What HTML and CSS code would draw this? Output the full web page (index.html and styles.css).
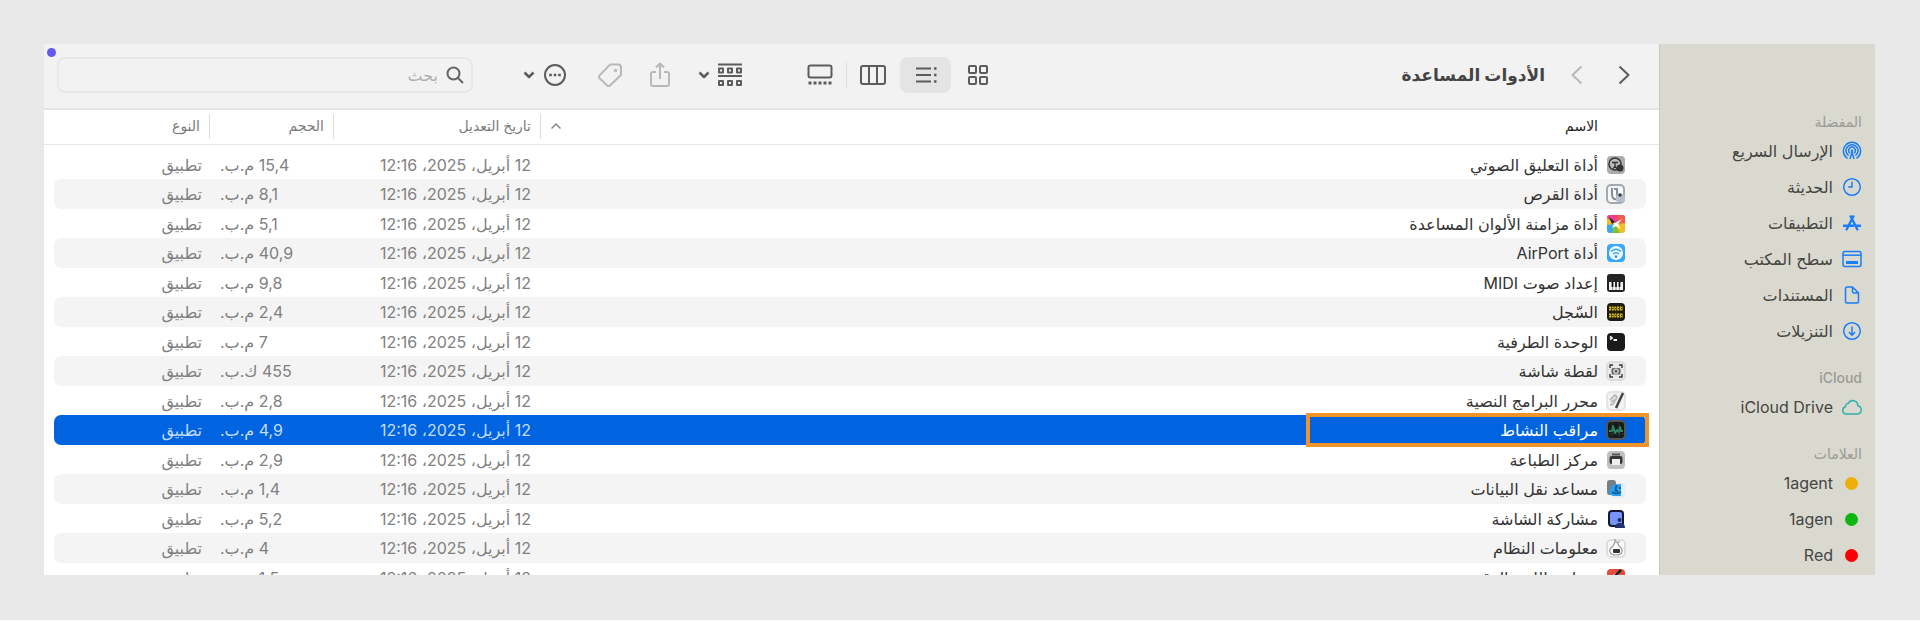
FILE: index.html
```
<!DOCTYPE html>
<html lang="ar" dir="rtl">
<head>
    <meta charset="UTF-8">
    <meta name="viewport" content="width=device-width, initial-scale=1.0">
    <title>الأدوات المساعدة</title>
    <link rel="stylesheet" href="styles.css">
</head>
<body>
<div class="desktop">
    <div class="window">
        <!-- الشريط الجانبي -->
        <nav class="sidebar">
            <h2>المفضلة</h2>
            <ul>
                <li><a href="#"><svg viewBox="0 0 20 20"><path d="M5.5 17.3a8.6 8.6 0 1 1 9 0M6.6 14.6a6 6 0 1 1 6.8 0M8 12.2a3.4 3.4 0 1 1 4 0M8 18l2-7 2 7"/><circle class="fill" cx="10" cy="9.7" r="1.3"/></svg>الإرسال السريع</a></li>
                <li><a href="#"><svg viewBox="0 0 20 20"><circle cx="10" cy="10" r="8.3"/><path d="M10 4.8V10H6.2"/></svg>الحديثة</a></li>
                <li><a href="#"><svg class="thick" viewBox="0 0 20 20"><path d="M8.2 2.5l7.6 14.8M11.8 2.5L4.2 17.3M1 12.8h11M14 12.8h5"/></svg>التطبيقات</a></li>
                <li><a href="#"><svg viewBox="0 0 20 20"><rect x="1" y="2.5" width="18" height="15" rx="2"/><path d="M1 6.2h18"/><rect class="fill" x="4" y="12" width="12" height="3"/></svg>سطح المكتب</a></li>
                <li><a href="#"><svg viewBox="0 0 20 20"><path d="M5 2h5.5L16.5 8v8.5a1.5 1.5 0 0 1-1.5 1.5H5a1.5 1.5 0 0 1-1.5-1.5v-13A1.5 1.5 0 0 1 5 2zM10.5 2v4.5A1.5 1.5 0 0 0 12 8h4.5"/></svg>المستندات</a></li>
                <li><a href="#"><svg viewBox="0 0 20 20"><circle cx="10" cy="10" r="8.3"/><path d="M10 5.5v8.5M6.9 11l3.1 3.2 3.1-3.2"/></svg>التنزيلات</a></li>
            </ul>
            <h2>iCloud</h2>
            <ul>
                <li><a href="#"><svg class="cloud" viewBox="0 0 20 20"><path d="M4.5 17a3.7 3.7 0 0 1-.9-7.3 3 3 0 0 1 2.8-3.4 5 5 0 0 1 9.4 2.4 4.2 4.2 0 0 1-.3 8.3z"/></svg>iCloud Drive</a></li>
            </ul>
            <h2>العلامات</h2>
            <ul>
                <li><a href="#"><i class="tag yellow"></i>1agent</a></li>
                <li><a href="#"><i class="tag green"></i>1agen</a></li>
                <li><a href="#"><i class="tag red"></i>Red</a></li>
            </ul>
        </nav>

        <main class="content">
            <!-- شريط الأدوات -->
            <header class="toolbar">
                <div class="nav">
                    <button aria-label="رجوع"><svg width="12" height="20" viewBox="0 0 12 20"><path d="M1.5 1.5l9 8.5-9 8.500"/></svg></button>
                    <button class="dim" aria-label="تقدم"><svg width="12" height="20" viewBox="0 0 12 20"><path d="M10.5 1.5l-9 8.5 9 8.500"/></svg></button>
                </div>
                <h1>الأدوات المساعدة</h1>
                <div class="views">
                    <button aria-label="أيقونات"><svg width="22" height="22" viewBox="0 0 22 22"><rect x="2" y="2" width="7" height="7" rx="1"/><rect x="13" y="2" width="7" height="7" rx="1"/><rect x="2" y="13" width="7" height="7" rx="1"/><rect x="13" y="13" width="7" height="7" rx="1"/></svg></button>
                    <button class="on" aria-label="قائمة"><svg width="24" height="20" viewBox="0 0 24 20"><path d="M2 3.500h15M2 10h15M2 16.500h15"/><path d="M20 3.500h2.500M20 10h2.500M20 16.500h2.500" stroke-width="2.500"/></svg></button>
                    <button aria-label="أعمدة"><svg width="26" height="22" viewBox="0 0 26 22"><rect x="1" y="2" width="24" height="18" rx="2"/><path d="M9 2v18M17 2v18"/></svg></button>
                    <span class="line"></span>
                    <button aria-label="معرض"><svg width="26" height="22" viewBox="0 0 26 22"><rect x="1.500" y="1.500" width="23" height="12" rx="2"/><path d="M1.500 19h23" stroke-width="3" stroke-dasharray="3 2"/></svg></button>
                </div>
                <button class="menu group" aria-label="تجميع"><svg width="24" height="24" viewBox="0 0 24 24"><path d="M0 1.500h24M0 13h24"/><path d="M1 5.500h4v4H1zM10 5.500h4v4h-4zM19 5.500h4v4h-4zM1 18h4v4H1zM10 18h4v4h-4zM19 18h4v4h-4z"/></svg><svg width="12" height="8" viewBox="0 0 12 8"><path d="M1.500 1.500L6 6l4.500-4.500" stroke-width="2.500"/></svg></button>
                <button class="dim share" aria-label="مشاركة"><svg width="20" height="26" viewBox="0 0 20 26"><path d="M6 10H3a2 2 0 0 0-2 2v10a2 2 0 0 0 2 2h14a2 2 0 0 0 2-2V12a2 2 0 0 0-2-2h-3M10 17V2M6 5.500l4-4 4 4"/></svg></button>
                <button class="dim tags" aria-label="علامات"><svg width="24" height="26" viewBox="0 0 24 26"><path d="M13 2.500h7a3 3 0 0 1 3 3V12a2 2 0 0 1-.6 1.500L12 23.500a2 2 0 0 1-2.900 0L1.600 16.300a2 2 0 0 1 0-2.900L11.500 3.100A2 2 0 0 1 13 2.500z"/><circle cx="17.500" cy="8.500" r=".7"/></svg></button>
                <button class="menu more" aria-label="المزيد"><svg width="24" height="24" viewBox="0 0 24 24"><circle cx="12" cy="12" r="10"/><path d="M6.200 12h2.600M10.700 12h2.600M15.200 12h2.600" stroke-width="2.500"/></svg><svg width="12" height="8" viewBox="0 0 12 8"><path d="M1.500 1.500L6 6l4.500-4.500" stroke-width="2.500"/></svg></button>
                <label class="search">
                    <svg width="18" height="18" viewBox="0 0 18 18"><circle cx="7.500" cy="7.500" r="6"/><path d="M12 12l5 5"/></svg>
                    <input type="text" placeholder="بحث" aria-label="بحث">
                </label>
            </header>

            <!-- قائمة الملفات -->
            <table>
                <colgroup><col><col class="c-date"><col class="c-size"><col class="c-kind"></colgroup>
                <thead>
                    <tr>
                        <th class="name">الاسم <svg width="12" height="8" viewBox="0 0 12 8"><path d="M1.500 6.500L6 2l4.500 4.500"/></svg></th>
                        <th>تاريخ التعديل</th>
                        <th>الحجم</th>
                        <th>النوع</th>
                    </tr>
                </thead>
                <tbody>
                    <tr>
                        <td><svg viewBox="0 0 20 20"><rect x="1" y="1" width="18" height="18" rx="4" fill="#a9adb0"/><circle cx="9" cy="9" r="6" fill="#b9bdc0" stroke="#333" stroke-width="1.500"/><path d="M6 7.500h6M9 7v4l-2 3M9 11l2 3" stroke="#333" stroke-width="1.300"/><circle cx="14" cy="13" r="3.500" fill="#333"/></svg>أداة التعليق الصوتي</td>
                        <td>12 أبريل، 2025، 12:16</td><td>15,4 م.ب.</td><td>تطبيق</td>
                    </tr>
                    <tr>
                        <td><svg viewBox="0 0 20 20"><rect x="1" y="1" width="17" height="18" rx="4" fill="#f6f7f8" stroke="#a4a9ad"/><path d="M6 4v6q0 6 5 5V5H8" fill="#fff" stroke="#858b90"/><rect x="10" y="10" width="9" height="8" rx="2" fill="#b4bfc9"/><circle cx="14" cy="11" r="1.700" fill="#333f4a"/></svg>أداة القرص</td>
                        <td>12 أبريل، 2025، 12:16</td><td>8,1 م.ب.</td><td>تطبيق</td>
                    </tr>
                    <tr>
                        <td><svg viewBox="0 0 20 20"><rect x="1" y="1" width="18" height="18" rx="3" fill="#f5bd27"/><path d="M4 1h12a3 3 0 0 1 3 3L10 10 1 4a3 3 0 0 1 3-3z" fill="#e8408c"/><path d="M12 1h4a3 3 0 0 1 3 3v5l-8 1z" fill="#ef5c49"/><path d="M1 11l8-1-3 9H4a3 3 0 0 1-3-3z" fill="#38a8e8"/><path d="M9 11l-3 8h8z" fill="#70c83d"/><path d="M5 5l4 4 7-4-4 5 3 5-5-3-4 2 2-4z" fill="#fff"/><path d="M3 3l6 5-3 2z" fill="#222"/></svg>أداة مزامنة الألوان المساعدة</td>
                        <td>12 أبريل، 2025، 12:16</td><td>5,1 م.ب.</td><td>تطبيق</td>
                    </tr>
                    <tr>
                        <td><svg viewBox="0 0 20 20"><rect x="1" y="1" width="18" height="18" rx="4" fill="#38a7fa"/><circle cx="10" cy="10" r="7" fill="#edfaff"/><path d="M5 8.500q5-4.500 10 0M7 11q3-2.600 6 0" stroke="#38a7fa" stroke-width="1.500"/><circle cx="10" cy="13.500" r="1.300" fill="#287fe8"/></svg>أداة AirPort</td>
                        <td>12 أبريل، 2025، 12:16</td><td>40,9 م.ب.</td><td>تطبيق</td>
                    </tr>
                    <tr>
                        <td><svg viewBox="0 0 20 20"><rect x="1" y="1" width="18" height="18" rx="3" fill="#242424"/><path d="M3 9h14v8H3z" fill="#f0f0f0"/><path d="M6.500 9v5M10 9v5M13.500 9v5" stroke="#111" stroke-width="1.800"/><path d="M6.500 14v3M10 14v3M13.500 14v3" stroke="#777" stroke-width=".7"/></svg>إعداد صوت MIDI</td>
                        <td>12 أبريل، 2025، 12:16</td><td>9,8 م.ب.</td><td>تطبيق</td>
                    </tr>
                    <tr>
                        <td><svg viewBox="0 0 20 20"><rect x="1" y="1" width="18" height="18" rx="4" fill="#1d1b12"/><path d="M3 6.500h14M3 13.500h14" stroke="#d8bd17" stroke-width="4" stroke-dasharray="2 .7"/><path d="M3 6.500h14M3 13.500h14" stroke="#1d1b12" stroke-width=".8" stroke-dasharray="1 2"/></svg>السّجل</td>
                        <td>12 أبريل، 2025، 12:16</td><td>2,4 م.ب.</td><td>تطبيق</td>
                    </tr>
                    <tr>
                        <td><svg viewBox="0 0 20 20"><rect x="1" y="1" width="18" height="18" rx="4" fill="#1b1b1b"/><path d="M4 4.500l2 1.500-2 1.500M7.500 8h3.500" stroke="#eee"/></svg>الوحدة الطرفية</td>
                        <td>12 أبريل، 2025، 12:16</td><td>7 م.ب.</td><td>تطبيق</td>
                    </tr>
                    <tr>
                        <td><svg viewBox="0 0 20 20"><rect x="1" y="1" width="18" height="18" rx="4" fill="#e9e9e9" stroke="#ddd"/><path d="M4 7V4h3M13 4h3v3M16 13v3h-3M7 16H4v-3" stroke="#333" stroke-width="1.400"/><rect x="5.500" y="7" width="9" height="6.500" rx="1.500" fill="#666"/><circle cx="10" cy="10.300" r="2" fill="#333" stroke="#bbb"/></svg>لقطة شاشة</td>
                        <td>12 أبريل، 2025، 12:16</td><td>455 ك.ب.</td><td>تطبيق</td>
                    </tr>
                    <tr>
                        <td><svg viewBox="0 0 20 20"><rect x="1" y="1" width="18" height="18" rx="4" fill="#f2f2f2" stroke="#e4e4e4"/><path d="M4 9l5-5 2 2-4 7-3 1M5 11l5-3" stroke="#bbb"/><path d="M10 17l7-15" stroke="#444" stroke-width="2.500"/></svg>محرر البرامج النصية</td>
                        <td>12 أبريل، 2025، 12:16</td><td>2,8 م.ب.</td><td>تطبيق</td>
                    </tr>
                    <tr class="selected">
                        <td><svg viewBox="0 0 20 20"><rect x="1" y="1" width="18" height="18" rx="4" fill="#151b1b" stroke="#555"/><path d="M3 11h3l1-5 2 7 2-3 2 2 1-5 1 4h2" stroke="#318865"/><path d="M2 14h16M6 3v14M13 3v14" stroke="#35504a" stroke-width=".5"/></svg>مراقب النشاط<span class="mark"></span></td>
                        <td>12 أبريل، 2025، 12:16</td><td>4,9 م.ب.</td><td>تطبيق</td>
                    </tr>
                    <tr>
                        <td><svg viewBox="0 0 20 20"><rect x="1" y="1" width="18" height="18" rx="4" fill="#bfbfbf"/><rect x="3.500" y="6" width="13" height="8" rx="2" fill="#383838"/><path d="M6 4.500h8" stroke="#555" stroke-width="2"/><rect x="6" y="9" width="8" height="6" fill="#eee"/></svg>مركز الطباعة</td>
                        <td>12 أبريل، 2025، 12:16</td><td>2,9 م.ب.</td><td>تطبيق</td>
                    </tr>
                    <tr>
                        <td><svg viewBox="0 0 20 20"><rect x="6" y="4" width="13" height="15" rx="3" fill="#e4edf4"/><rect x="1" y="1" width="9" height="15" rx="3" fill="#747f87"/><path d="M6 7q3-2 9-2v12H8q-5-1-5-4z" fill="#27a1f3"/><path d="M11 6q-2 4-1 6h2M14 8v2M6 13q4 3 9 0" stroke="#175b94"/></svg>مساعد نقل البيانات</td>
                        <td>12 أبريل، 2025، 12:16</td><td>1,4 م.ب.</td><td>تطبيق</td>
                    </tr>
                    <tr>
                        <td><svg viewBox="0 0 20 20"><rect x="3" y="2" width="14" height="15" rx="3" fill="#7794fb" stroke="#14182e" stroke-width="2"/><circle cx="13.500" cy="11" r="2" fill="#20295c"/><path d="M9 19q0-5 5-5t5 5z" fill="#27316b"/></svg>مشاركة الشاشة</td>
                        <td>12 أبريل، 2025، 12:16</td><td>5,2 م.ب.</td><td>تطبيق</td>
                    </tr>
                    <tr>
                        <td><svg viewBox="0 0 20 20"><rect x="1" y="2" width="18" height="17" rx="4" fill="#fafafa" stroke="#ddd"/><path d="M9 1v3h5M9 4L7 8q-4 3-3 6 1 3 6 3t6-3q1-3-3-6l-2-4" stroke="#999" stroke-width="1.200"/><rect x="7" y="11" width="7" height="4" rx="1" fill="#333"/></svg>معلومات النظام</td>
                        <td>12 أبريل، 2025، 12:16</td><td>4 م.ب.</td><td>تطبيق</td>
                    </tr>
                    <tr>
                        <td><svg viewBox="0 0 20 20"><rect x="1" y="1" width="18" height="18" rx="4" fill="#e64e3c"/><path d="M4 9l6-4 5 3-4 4z" fill="#d8dde0"/><path d="M6 11l9-9" stroke="#222" stroke-width="2.500"/></svg>مقياس اللون الرقمية</td>
                        <td>12 أبريل، 2025، 12:16</td><td>1,5 م.ب.</td><td>تطبيق</td>
                    </tr>
                </tbody>
            </table>
        </main>
        <span class="dot"></span>
    </div>
</div>
</body>
</html>
```

FILE: styles.css
```
*{
    box-sizing: border-box;
}
body{
    margin: 0;
    background: #fff;
    font-family: Inter, "DejaVu Sans", sans-serif;
    font-size: 16px;
    color: #333;
}
.desktop{
    padding: 44px 45px 45px 44px;
    background: #e9e9e9;
}
.window{
    position: relative;
    display: flex;
    height: calc(100vh - 90px);
    overflow: hidden;
    background: #fff;
}
.dot{
    position: absolute;
    left: 3px;
    top: 4px;
    width: 9px;
    height: 9px;
    border-radius: 50%;
    background: #6558f0;
}
svg{
    fill: none;
    stroke: currentColor;
    stroke-width: 2;
    stroke-linejoin: round;
    flex: none;
}

/* الشريط الجانبي */
.sidebar{
    flex: none;
    width: 216px;
    padding: 67px 13px 0;
    background: #d9d9d0;
    border-left: 1px solid #c8c8c0;
}
.sidebar h2{
    margin: 0;
    line-height: 22px;
    font-size: 14px;
    font-weight: 500;
    color: #9b9b94;
}
.sidebar ul{
    margin: 0 0 18px;
    padding: 0;
    list-style: none;
}
.sidebar a{
    display: flex;
    align-items: center;
    gap: 9px;
    height: 36px;
    color: #454542;
    text-decoration: none;
}
.sidebar svg{
    width: 20px;
    height: 20px;
    color: #1a7df5;
    stroke-width: 1.5;
}
.sidebar svg.thick{
    stroke-width: 2.4;
}
.sidebar .fill{
    fill: currentColor;
    stroke: none;
}
.sidebar svg.cloud{
    color: #35b0a8;
}
.tag{
    width: 13px;
    height: 13px;
    margin: 0 4px 0 3px;
    border-radius: 50%;
}
.yellow{
    background: #edae08;
}
.green{
    background: #0bb710;
}
.red{
    background: #fb0007;
}

/* شريط الأدوات */
.content{
    flex: 1;
    min-width: 0;
}
.toolbar{
    display: flex;
    align-items: center;
    height: 66px;
    padding: 0 29px 2px 13px;
    background: #f2f2f2;
    border-bottom: 2px solid #e3e3e3;
}
button{
    display: flex;
    align-items: center;
    justify-content: center;
    padding: 0;
    border: 0;
    background: none;
    color: #5c5c5c;
}
.dim{
    color: #b8b8b8;
}
.nav{
    display: flex;
    gap: 35px;
}
.toolbar h1{
    flex: 1;
    margin: 0 26px 0 0;
    font-size: 17px;
    font-weight: bold;
    color: #444;
}
.views{
    display: flex;
    align-items: center;
}
.views button.on{
    width: 51px;
    height: 36px;
    margin: 0 16px 0 14px;
    border-radius: 8px;
    background: #e4e4e4;
}
.line{
    width: 1px;
    height: 26px;
    margin: 0 13px;
    background: #e0e0e0;
}
.menu{
    gap: 8px;
}
.group{
    margin-right: 65px;
}
.share{
    margin-right: 28px;
}
.tags{
    margin-right: 28px;
}
.more{
    margin-right: 31px;
}
.search{
    display: flex;
    align-items: center;
    gap: 8px;
    width: 416px;
    height: 36px;
    margin-right: 50px;
    padding: 0 7px;
    border: 2px solid #e8e8e8;
    border-radius: 8px;
    color: #666;
}
.search input{
    flex: 1;
    min-width: 0;
    padding: 0;
    border: 0;
    outline: 0;
    background: none;
    font: inherit;
}
.search input::placeholder{
    color: #b0b0b0;
}

/* قائمة الملفات */
table{
    width: 100%;
    padding: 0 13px 0 10px;
    border-collapse: separate;
    border-spacing: 0;
    table-layout: fixed;
    background: linear-gradient(#e6e6e6, #e6e6e6) 0 34px / 100% 1px no-repeat;
}
.c-date{
    width: 207px;
}
.c-size{
    width: 124px;
}
.c-kind{
    width: 156px;
}
th{
    position: relative;
    height: 34px;
    padding: 0 10px 4px 0;
    font-size: 14px;
    font-weight: 500;
    text-align: right;
    color: #7b7b7b;
}
th.name{
    padding-right: 48px;
    color: #222;
}
th.name svg{
    position: absolute;
    left: 9px;
    top: 12px;
    color: #888;
    stroke-width: 1.5;
}
/* الخط الفاصل بين الأعمدة */
th + th::before{
    content: "";
    position: absolute;
    right: 0;
    top: 4px;
    width: 1px;
    height: 25px;
    background: #dcdcdc;
}
tbody::before{
    content: "";
    display: block;
    height: 6px;
}
td{
    height: 29px;
    padding: 0 10px 0 0;
    line-height: 20px;
    white-space: nowrap;
    color: #808080;
}
tr:nth-child(even) td{
    height: 30px;
    background: #f4f4f4;
}
td:first-child{
    position: relative;
    padding-right: 20px;
    border-radius: 0 7px 7px 0;
    color: #333;
}
td:nth-child(3){
    padding: 0 0 0 10px;
    text-align: left;
}
td:last-child{
    padding-right: 8px;
    border-radius: 7px 0 0 7px;
}
td svg{
    width: 20px;
    height: 20px;
    margin-left: 8px;
    vertical-align: top;
    stroke: none;
}
tr.selected:nth-child(even) td{
    background: #0064e1;
    color: #c4dcfb;
}
tr.selected:nth-child(even) td:first-child{
    color: #fff;
}
/* إطار التمييز */
.mark{
    position: absolute;
    right: -3px;
    top: -2px;
    width: 343px;
    height: 34px;
    border: 4px solid #f0932b;
}
```
